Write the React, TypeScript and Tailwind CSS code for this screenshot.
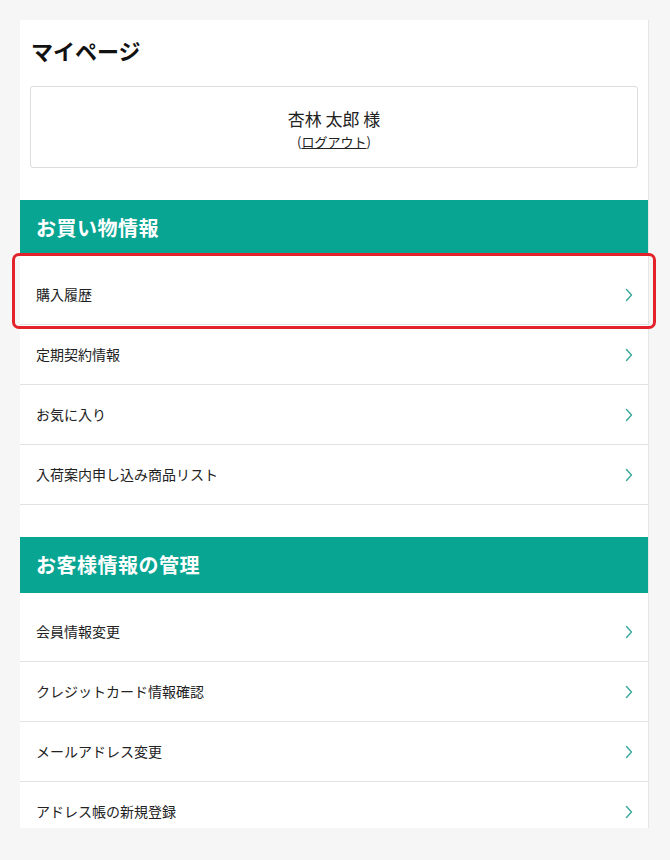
import React from "react"

const shopping = ["購入履歴", "定期契約情報", "お気に入り", "入荷案内申し込み商品リスト"]
const account = ["会員情報変更", "クレジットカード情報確認", "メールアドレス変更", "アドレス帳の新規登録"]

const Chevron = () => (
    <svg width="8" height="14" viewBox="0 0 8 14" fill="none" className="shrink-0">
        <path d="M1.5 1.5 L6.5 7 L1.5 12.5" stroke="#3aa999" strokeWidth="1.4" strokeLinecap="round" strokeLinejoin="round" />
    </svg>
)

const MenuRow = ({ label }: { label: string }) => (
    <div className="h-[60px] flex items-center justify-between pl-4 pr-[15px] border-b border-[#e2e2e2]">
        <span className="text-[14px] text-[#222]">{label}</span>
        <Chevron />
    </div>
)

const Section = ({ title, items, highlightFirst }: { title: string; items: string[]; highlightFirst?: boolean }) => (
    <section>
        <h2 className="h-14 flex items-center px-4 bg-[#08a592] text-white text-[20px] font-bold tracking-wide">
            {title}
        </h2>
        <div className="pt-[9px] relative">
            {items.map((label) => (
                <MenuRow key={label} label={label} />
            ))}
            {highlightFirst && (
                <div className="absolute left-[-8px] right-[-8px] top-[-3px] h-[76px] border-[3px] border-[#e3222b] rounded-[7px] pointer-events-none" />
            )}
        </div>
    </section>
)

export default function App() {
    return (
        <div
            className="min-h-[860px] bg-[#f6f6f6] pt-5 pl-5"
            style={{ fontFamily: '"Noto Sans CJK JP", "Noto Sans", sans-serif' }}
        >
            <div className="w-[629px] h-[808px] bg-white border-r border-[#e6e6e6] overflow-y-clip">
                <h1 className="pt-[18px] pl-[11px] text-[22px] leading-6 font-bold text-[#111]">マイページ</h1>
                <div className="px-[10px] mt-6">
                    <div className="h-[82px] border border-[#dcdcdc] rounded-[3px] flex flex-col items-center pt-5">
                        <p className="text-[17px] leading-6 text-[#222]">杏林 太郎 様</p>
                        <p className="text-[13px] leading-[18px] mt-[2px] text-[#222]">
                            (<a href="#" className="underline">ログアウト</a>)
                        </p>
                    </div>
                </div>
                <div className="mt-8">
                    <Section title="お買い物情報" items={shopping} highlightFirst />
                </div>
                <div className="mt-[32px]">
                    <Section title="お客様情報の管理" items={account} />
                </div>
            </div>
        </div>
    )
}
